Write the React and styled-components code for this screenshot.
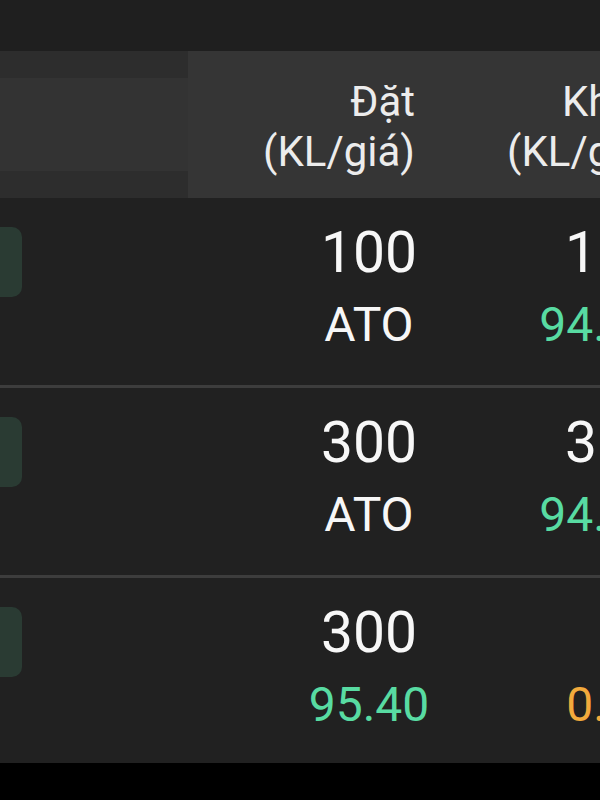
import React from 'react'
import styled, { createGlobalStyle } from 'styled-components'

const GlobalStyle = createGlobalStyle`
  html, body {
    margin: 0;
    padding: 0;
    background: #000;
  }
  body {
    font-family: Roboto, "Noto Sans", "Liberation Sans", sans-serif;
  }
`

const orders = [
  { qty: '100', price: 'ATO', priceTone: 'white', matchQty: '100', matchPrice: '94.550', matchTone: 'green' },
  { qty: '300', price: 'ATO', priceTone: 'white', matchQty: '300', matchPrice: '94.550', matchTone: 'green' },
  { qty: '300', price: '95.40', priceTone: 'green', matchQty: '', matchPrice: '0.00', matchTone: 'orange' },
]

const tones = {
  white: '#f7f7f7',
  green: '#58dba2',
  orange: '#f2aa3c',
}

function App() {
  return (
    <Screen>
      <GlobalStyle />
      <TopBar />
      <HeaderRow>
        <StickyHead>
          <Strip />
          <StripMiddle />
          <Strip />
        </StickyHead>
        <HeadCell>
          Đặt
          <br />
          (KL/giá)
        </HeadCell>
        <HeadCell>
          Khớp
          <br />
          (KL/giá)
        </HeadCell>
      </HeaderRow>

      {orders.map((o, i) => (
        <Row key={i} last={i === orders.length - 1}>
          <StickyCell>
            <SideBadge />
          </StickyCell>
          <ValueCell>
            <Qty>{o.qty}</Qty>
            <Price tone={o.priceTone}>{o.price}</Price>
          </ValueCell>
          <ValueCell>
            <Qty>{o.matchQty || '\u00a0'}</Qty>
            <Price tone={o.matchTone}>{o.matchPrice}</Price>
          </ValueCell>
        </Row>
      ))}
    </Screen>
  )
}

const Screen = styled.div`
  width: 600px;
  height: 800px;
  overflow: hidden;
  background: #000;
`

const TopBar = styled.div`
  height: 51px;
  background: #1f1f1f;
`

const HeaderRow = styled.div`
  display: grid;
  grid-template-columns: 188px 244px 244px;
  height: 147px;
  background: #353535;
`

const StickyHead = styled.div`
  display: flex;
  flex-direction: column;
`

const Strip = styled.div`
  height: 27px;
  background: #2d2d2d;
`

const StripMiddle = styled.div`
  flex: 1;
  background: #333333;
`

const HeadCell = styled.div`
  padding: 26px 17px 0 0;
  text-align: right;
  font-size: 42px;
  line-height: 50px;
  color: #ececec;
  white-space: nowrap;
`

const Row = styled.div`
  display: grid;
  grid-template-columns: 188px 244px 244px;
  height: ${(p) => (p.last ? '185px' : '187px')};
  background: #212121;
  border-bottom: ${(p) => (p.last ? 'none' : '3px solid #3d3d3d')};
`

const StickyCell = styled.div`
  padding-top: 29px;
  overflow: hidden;
`

const SideBadge = styled.div`
  width: 60px;
  height: 70px;
  margin-left: -38px;
  border-radius: 10px;
  background: #2a3b33;
`

const ValueCell = styled.div`
  display: flex;
  flex-direction: column;
  align-items: center;
  padding: 22px 0 0 118px;
  white-space: nowrap;
`

const Qty = styled.div`
  font-size: 57px;
  line-height: 66px;
  color: #f7f7f7;
`

const Price = styled.div`
  margin-top: 11px;
  font-size: 48px;
  line-height: 56px;
  color: ${(p) => tones[p.tone]};
`

export default App
